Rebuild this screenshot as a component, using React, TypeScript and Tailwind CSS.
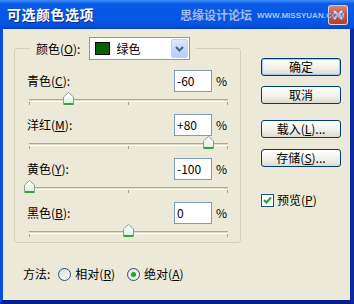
import React from "react";

const font = { fontFamily: '"Noto Sans CJK SC", "Noto Sans", sans-serif' };

const sliders = [
  { name: "青色", key: "C", value: -60, text: "-60" },
  { name: "洋红", key: "M", value: 80, text: "+80" },
  { name: "黄色", key: "Y", value: -100, text: "-100" },
  { name: "黑色", key: "B", value: 0, text: "0" },
];

function Thumb({ value }: { value: number }) {
  const left = ((value + 100) / 200) * 199 - 5.5;
  return (
    <svg
      width="11"
      height="13"
      viewBox="0 0 11 13"
      className="absolute top-[0px]"
      style={{ left }}
    >
      <defs>
        <linearGradient id={`tg${value}`} x1="0" y1="0" x2="0" y2="1">
          <stop offset="0" stopColor="#ffffff" />
          <stop offset="1" stopColor="#dcefdc" />
        </linearGradient>
      </defs>
      <path
        d="M5.5 0.5 L10.5 5 L10.5 12.5 L0.5 12.5 L0.5 5 Z"
        fill={`url(#tg${value})`}
        stroke="#8a9e94"
      />
      <path d="M1 11.5 H10 M1 12.5 H10" stroke="#3f9f3f" />
    </svg>
  );
}

function SliderRow({ name, keyChar, value, text, last }: { name: string; keyChar: string; value: number; text: string; last?: boolean }) {
  return (
    <div className="flex flex-col">
      <div className="flex h-[22px] items-center">
        <span className="flex-1">
          {name}(<u>{keyChar}</u>):
        </span>
        <div className="flex h-[22px] w-[38px] items-center border border-[#7f9db9] bg-white pl-[2px]">
          {text}
        </div>
        <span className="ml-[4px] w-[12px]">%</span>
      </div>
      <div className={`relative ml-[2px] w-[199px] ${last ? "h-[18px]" : "h-[22px]"}`}>
        <div className="mt-[7px] h-[3px] border-t border-b border-t-[#a8a89c] border-b-white bg-[#dedbc8]" />
        <div className="flex justify-between">
          <div className="h-[3px] w-px bg-[#a0a094]" />
          <div className="h-[3px] w-px bg-[#a0a094]" />
          <div className="h-[3px] w-px bg-[#a0a094]" />
        </div>
        <Thumb value={value} />
      </div>
    </div>
  );
}

function Button({ label, primary }: { label: React.ReactNode; primary?: boolean }) {
  return (
    <div
      className={`flex h-[18px] w-[80px] items-center justify-center rounded-[3px] border border-[#003c74] bg-[linear-gradient(to_bottom,#ffffff,#f0efe8_60%,#dcdad0)] ${
        primary ? "shadow-[inset_0_0_0_1px_#a8c4f4]" : ""
      }`}
    >
      {label}
    </div>
  );
}

function Radio({ checked }: { checked?: boolean }) {
  return (
    <div className="flex h-[13px] w-[13px] items-center justify-center rounded-full border border-[#1c5180] bg-[linear-gradient(135deg,#dcdcd4,#ffffff)]">
      {checked && <div className="h-[5px] w-[5px] rounded-full bg-[#21a121]" />}
    </div>
  );
}

export default function App() {
  return (
    <div className="flex h-[304px] w-[354px] flex-col text-[12px] text-black" style={font}>
      {/* Title bar */}
      <div className="relative flex h-[29px] items-center justify-between bg-[linear-gradient(to_bottom,#3d8ef7_0%,#0a5ae6_14%,#0657e8_60%,#0552df_88%,#0340c6_100%)] pl-[7px] pr-[6px]">
        <span className="text-[14px] font-bold tracking-[0.5px] text-white [text-shadow:1px_1px_0_#0a2a8a]">
          可选颜色选项
        </span>
        <div className="flex h-[20px] w-[20px] items-center justify-center rounded-[3px] border border-white/80 bg-[linear-gradient(to_bottom,#ec8a6a,#d9542c_50%,#c8401c)] opacity-90">
          <svg width="12" height="12" viewBox="0 0 12 12">
            <path d="M2 2 L10 10 M10 2 L2 10" stroke="white" strokeWidth="2" />
          </svg>
        </div>
        {/* watermark over the title bar */}
        <div className="absolute left-[180px] top-0 z-10 flex h-full items-center whitespace-nowrap">
          <span className="text-[12px] font-bold leading-none text-[#9cbcf8] [text-shadow:0_0_1px_#1b45b8,1px_0_0_#2a56c8]">
            思缘设计论坛
          </span>
          <span
            className="ml-[5px] mt-[2px] text-[8px] font-bold leading-none text-[#a9c4f8] [text-shadow:0_0_1px_#1b45b8]"
            style={{ fontFamily: '"Liberation Sans", sans-serif' }}
          >
            WWW.MISSYUAN.COM
          </span>
        </div>
      </div>

      {/* Body */}
      <div className="flex flex-1 border-b-[4px] border-l-[3px] border-r-[4px] border-b-[#0b1f8c] border-l-[#0a4fdc] border-r-[#0b2a9c] bg-[#ece9d8] pl-[11px] pt-[8px]">
        <div className="flex w-[226px] flex-col">
          <fieldset className="rounded-[3px] border border-[#d0d0bf] px-[12px] pb-0">
            <legend className="ml-[3px] flex items-center px-[6px]">
              <span className="mr-[9px]">
                颜色(<u>O</u>):
              </span>
              <div className="flex h-[23px] w-[101px] items-center border border-[#7f9db9] bg-white pl-[5px] pr-px">
                <div className="h-[13px] w-[15px] border border-black bg-[#006400]" />
                <span className="ml-[6px] flex-1">绿色</span>
                <div className="flex h-[19px] w-[17px] items-center justify-center rounded-[2px] border border-[#c3d3fd] bg-[linear-gradient(to_bottom,#dbe6fd,#b7cdf8)]">
                  <svg width="9" height="6" viewBox="0 0 9 6">
                    <path d="M1 1 L4.5 4.5 L8 1" stroke="#4d6185" strokeWidth="2" fill="none" />
                  </svg>
                </div>
              </div>
            </legend>
            <div className="flex flex-col pt-[10px]">
              {sliders.map((s, i) => (
                <SliderRow
                  key={s.key}
                  name={s.name}
                  keyChar={s.key}
                  value={s.value}
                  text={s.text}
                  last={i === sliders.length - 1}
                />
              ))}
            </div>
          </fieldset>

          <div className="ml-[9px] mt-[23px] flex h-[16px] items-center">
            <span>方法:</span>
            <div className="ml-[8px]">
              <Radio />
            </div>
            <span className="ml-[4px]">
              相对(<u>R</u>)
            </span>
            <div className="ml-[12px]">
              <Radio checked />
            </div>
            <span className="ml-[4px]">
              绝对(<u>A</u>)
            </span>
          </div>
        </div>

        <div className="ml-[21px] flex flex-col pt-[21px]">
          <Button label="确定" primary />
          <div className="mt-[10px]">
            <Button label="取消" />
          </div>
          <div className="mt-[16px]">
            <Button label={<span>载入(<u>L</u>)...</span>} />
          </div>
          <div className="mt-[11px]">
            <Button label={<span>存储(<u>S</u>)...</span>} />
          </div>
          <div className="mt-[24px] flex items-center">
            <div className="flex h-[13px] w-[13px] items-center justify-center border border-[#1c5180] bg-white">
              <svg width="9" height="9" viewBox="0 0 9 9">
                <path d="M1 4 L3.5 6.5 L8 1.5" stroke="#21a121" strokeWidth="2" fill="none" />
              </svg>
            </div>
            <span className="ml-[3px]">
              预览(<u>P</u>)
            </span>
          </div>
        </div>
      </div>
    </div>
  );
}
